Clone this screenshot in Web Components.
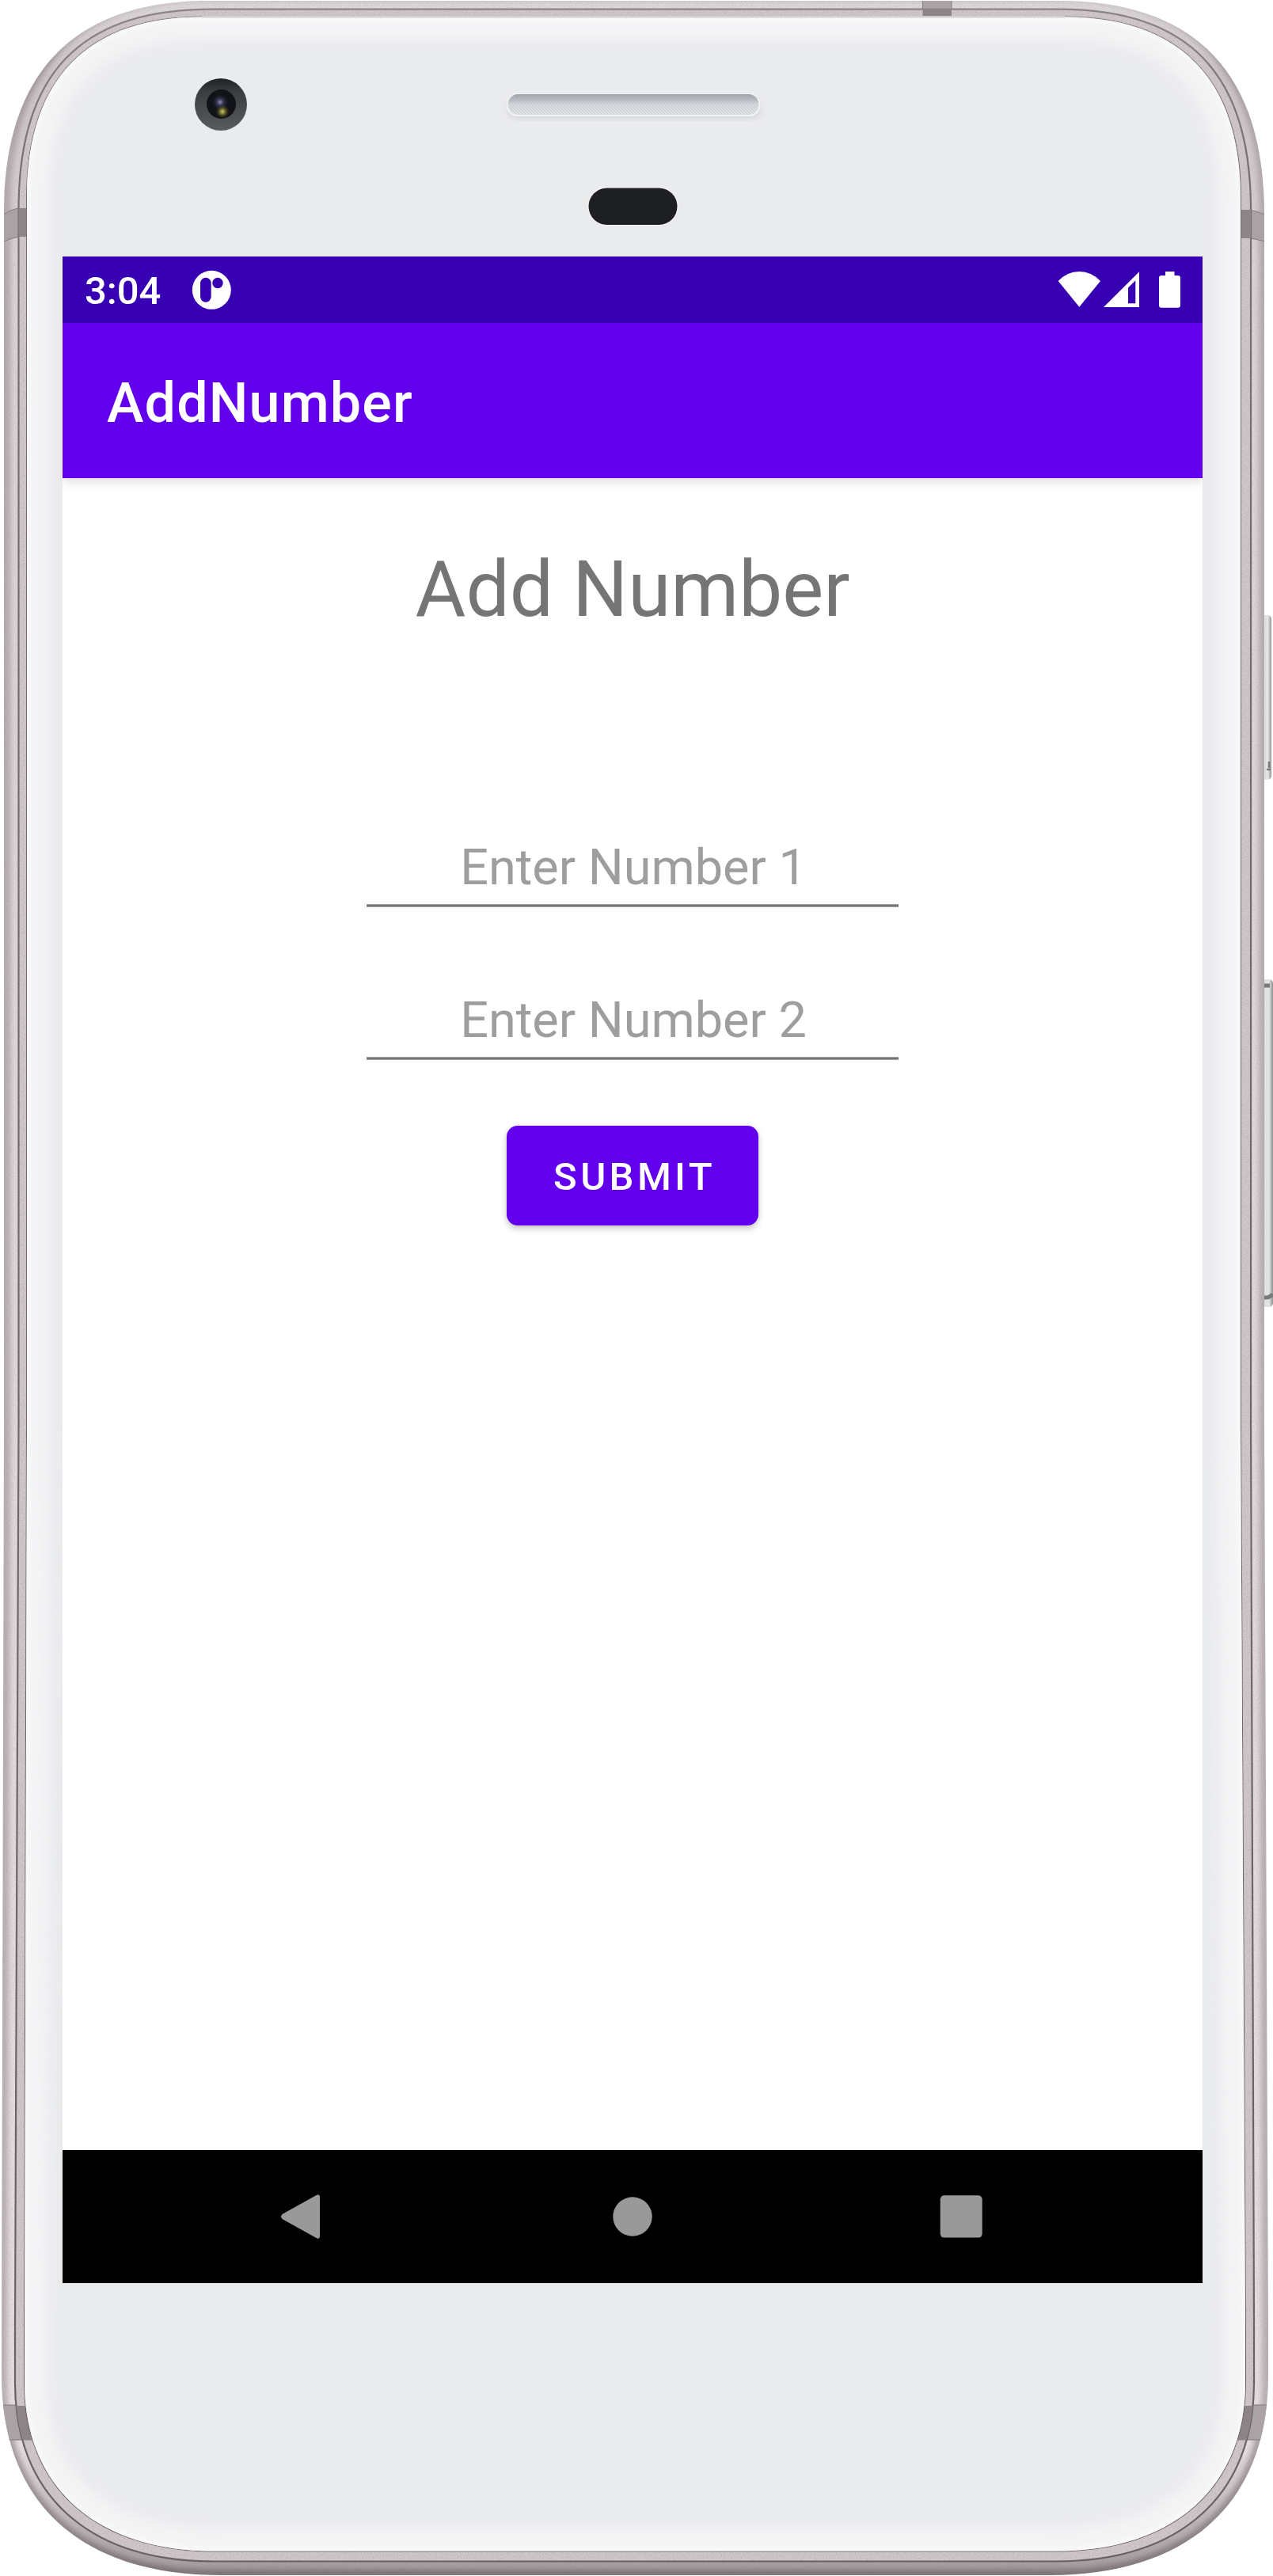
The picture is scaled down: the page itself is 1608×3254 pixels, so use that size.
<!DOCTYPE html>
<html lang="en">
<head>
<meta charset="utf-8">
<title>AddNumber</title>
<style>
  html, body { margin: 0; background: #fff; }
  body { width: 1608px; height: 3254px; overflow: hidden; font-family: Roboto, sans-serif; }
</style>
</head>
<body>
<phone-frame>
  <status-bar>3:04</status-bar>
  <app-bar>AddNumber</app-bar>
  <number-form heading="Add Number">
    <number-field>Enter Number 1</number-field>
    <number-field>Enter Number 2</number-field>
    <submit-button slot="action">SUBMIT</submit-button>
  </number-form>
  <nav-bar></nav-bar>
</phone-frame>
<script>
const define = (name, html, setup) => customElements.define(name, class extends HTMLElement {
  constructor() {
    super();
    this.attachShadow({ mode: 'open' }).innerHTML = html;
  }
  connectedCallback() { if (setup) setup(this); }
});

/* Device body: metal rim, glass, camera, earpiece, sensor, side keys. */
const OUTER = 'M5 270C5 100 85 1 265 1H1337C1517 1 1597 100 1597 270V1800L1602 2940V3000C1602 3160 1504 3253 1324 3253H280C100 3253 2 3160 2 3000V2940L5 1800Z';
const SEAM = 'M23.5 265C23.5 95 100 11.7 265 11.7H1338C1503 11.7 1580 95 1580 265V1800L1584 2940V3010C1584 3150 1493 3235.5 1333 3235.5H270C110 3235.5 19 3150 19 3010V2940L23.5 1800Z';
const GLASS = 'M34 250C34 95 115 21.5 255 21.5H1345C1485 21.5 1567 95 1567 250V1800L1573 2940V3010C1573 3140 1484 3222.5 1334 3222.5H270C120 3222.5 31 3140 31 3010V2940L34 1800Z';

define('phone-frame', `
<style>
  :host { display: grid; width: 1608px; height: 3254px; }
  svg, main { grid-area: 1 / 1; }
  svg { display: block; }
  main { display: flex; flex-direction: column; width: 1440px; height: 2560px; margin: 324px 0 0 79px; background: #fff; z-index: 1; }
</style>
<svg width="1608" height="3254" viewBox="0 0 1608 3254">
  <defs>
    <clipPath id="co"><path d="${OUTER}"/></clipPath>
    <clipPath id="cs"><path d="${SEAM}"/></clipPath>
    <clipPath id="cg"><path d="${GLASS}"/></clipPath>
    <linearGradient id="rim" gradientUnits="userSpaceOnUse" x1="0" y1="0" x2="0" y2="3254">
      <stop offset="0" stop-color="#c9c2c4"/><stop offset=".025" stop-color="#9d9598"/><stop offset=".06" stop-color="#b4abae"/>
      <stop offset=".93" stop-color="#b9b0b4"/><stop offset=".98" stop-color="#8f868a"/><stop offset="1" stop-color="#7c7377"/>
    </linearGradient>
    <linearGradient id="shine" gradientUnits="userSpaceOnUse" x1="0" y1="0" x2="0" y2="3254">
      <stop offset="0" stop-color="#dfdadc"/><stop offset=".03" stop-color="#cbc3c6"/><stop offset=".1" stop-color="#dcd3d7"/>
      <stop offset=".95" stop-color="#e6dfe2"/><stop offset=".985" stop-color="#b5acb0"/><stop offset="1" stop-color="#a1989c"/>
    </linearGradient>
    <linearGradient id="line" gradientUnits="userSpaceOnUse" x1="0" y1="0" x2="0" y2="3254">
      <stop offset="0" stop-color="#8d8588"/><stop offset=".06" stop-color="#776e72"/><stop offset="1" stop-color="#665e62"/>
    </linearGradient>
    <linearGradient id="key" x1="0" x2="1" y1="0" y2="0">
      <stop offset="0" stop-color="#b9bab9"/><stop offset=".3" stop-color="#dfe1df"/><stop offset=".65" stop-color="#e3e5e3"/><stop offset="1" stop-color="#8f9190"/>
    </linearGradient>
    <linearGradient id="ear" x1="0" x2="0" y1="0" y2="1">
      <stop offset="0" stop-color="#9fa1aa"/><stop offset=".3" stop-color="#bcbec6"/><stop offset=".5" stop-color="#d6d8dd"/><stop offset="1" stop-color="#e0e2e5"/>
    </linearGradient>
    <linearGradient id="cam" x1="0" x2="0" y1="0" y2="1">
      <stop offset="0" stop-color="#1f2022"/><stop offset=".25" stop-color="#3c3d40"/><stop offset="1" stop-color="#5a5b5f"/>
    </linearGradient>
    <radialGradient id="lensA"><stop offset="0" stop-color="#8c8cb0"/><stop offset=".35" stop-color="#3b3a5c"/><stop offset="1" stop-color="#15161c" stop-opacity="0"/></radialGradient>
    <radialGradient id="lensB"><stop offset="0" stop-color="#d2c67c"/><stop offset=".35" stop-color="#75722f"/><stop offset="1" stop-color="#2b2c14" stop-opacity="0"/></radialGradient>
    <pattern id="mesh" width="4" height="4" patternUnits="userSpaceOnUse"><path d="M0 0L4 4" stroke="#b3b6bf" stroke-opacity=".5"/></pattern>
    <filter id="b3" x="-5%" y="-5%" width="110%" height="110%"><feGaussianBlur stdDeviation="3"/></filter>
    <filter id="b9" x="-5%" y="-5%" width="110%" height="110%"><feGaussianBlur stdDeviation="8"/></filter>
    <filter id="grain" x="0" y="0" width="100%" height="100%">
      <feTurbulence type="fractalNoise" baseFrequency=".55" numOctaves="2" seed="4"/>
      <feColorMatrix values="0 0 0 0 .35  0 0 0 0 .3  0 0 0 0 .33  1.6 0 0 0 -.68"/>
    </filter>
  </defs>

  <rect x="1594" y="777" width="12" height="208" rx="5" fill="url(#key)"/>
  <path d="M1603 962v8M1600 972h5" stroke="#77797a" stroke-width="2.5"/>
  <rect x="1594" y="1237" width="14" height="414" rx="5" fill="url(#key)"/>
  <path d="M1597 1245h7M1597 1639c5 0 9-1 10-5" stroke="#77797a" stroke-width="5" fill="none"/>

  <path d="${OUTER}" fill="url(#rim)"/>
  <g clip-path="url(#co)">
    <path d="${SEAM}" fill="none" stroke="url(#shine)" stroke-width="20" filter="url(#b3)"/>
    <rect width="1608" height="3254" filter="url(#grain)" opacity=".35"/>
    <g fill="#aaa2a5" stroke="#847b7f" stroke-width="1">
      <path d="M-2 276Q10 265 24 263V299Q10 301-2 309Z"/>
      <path d="M1610 279Q1596 268 1578 265V301Q1596 303 1610 310Z"/>
      <path d="M-5 3038H60V3082H-5ZM1540 3038H1612V3082H1540Z"/>
      <path d="M1165.500 -2H1202V14H1165.500Z"/>
    </g>
  </g>
  <path d="${SEAM}" fill="#cfc7ca" stroke="url(#line)" stroke-width="2.200"/>
  <g clip-path="url(#cs)">
    <rect width="1608" height="3254" filter="url(#grain)" opacity=".5"/>
    <path d="M20 263H40V299H20ZM1560 265H1582V301H1560ZM10 3039H70V3082.500H10ZM1530 3039H1590V3082.500H1530ZM1165.500 10H1202V26H1165.500Z" fill="#8c8487"/>
  </g>
  <path d="${GLASS}" fill="#eaebed" stroke="url(#line)" stroke-width="2"/>
  <g clip-path="url(#cg)">
    <path d="${GLASS}" fill="none" stroke="#f4f4f6" stroke-width="56" filter="url(#b9)"/>
    <path d="${GLASS}" fill="none" stroke="#f9f9fa" stroke-width="8" filter="url(#b3)"/>
  </g>
  <path d="M255 21.500H1345" stroke="#dcd8da" stroke-width="2.500"/>

  <circle cx="279" cy="132" r="33" fill="url(#cam)"/>
  <circle cx="279.500" cy="131.500" r="18.500" fill="#111318"/>
  <circle cx="278" cy="129" r="11" fill="url(#lensA)"/>
  <circle cx="281" cy="141" r="9" fill="url(#lensB)"/>

  <rect x="640" y="123" width="322" height="28" rx="14" fill="#d9dadd" filter="url(#b3)"/>
  <rect x="639.500" y="118" width="321" height="29" rx="14" fill="#f1f2f4"/>
  <rect x="641.500" y="119" width="317" height="26" rx="13" fill="url(#ear)"/>
  <rect x="641.500" y="119" width="317" height="26" rx="13" fill="url(#mesh)"/>
  <rect x="742.500" y="236.500" width="114" height="48.500" rx="24" fill="#f6f6f7"/>
  <rect x="743.500" y="237.500" width="112" height="46.500" rx="23.200" fill="#1d1f23"/>
</svg>
<main><slot></slot></main>`);

define('status-bar', `
<style>
  :host { display: flex; align-items: center; height: 84px; background: #3700b3; color: #fff; font: 500 49px/84px Roboto, sans-serif; }
  .time { width: 135px; padding: 4px 0 0 28px; }
  .icons { margin-left: auto; }
  svg { display: block; }
</style>
<span class="time"><slot></slot></span>
<svg width="50" height="84" viewBox="242 324 50 84">
  <circle cx="267.300" cy="366.300" r="24.500" fill="#fff"/>
  <rect x="253" y="350.700" width="13.700" height="31" rx="6.850" fill="#3700b3"/>
  <circle cx="275" cy="357.500" r="6.700" fill="#3700b3"/>
</svg>
<svg class="icons" width="189" height="84" viewBox="1330 324 189 84" fill="#fff">
  <path d="M1336.700 355Q1348 343 1363.300 343T1390 355L1363.300 387.700Z"/>
  <path fill-rule="evenodd" d="M1394 388L1439 343.300V388ZM1425 363.500V383.300H1434.300V354.300Z"/>
  <path d="M1472 343H1483.500V348H1488Q1491 348 1491 351V385.500Q1491 388.700 1488 388.700H1467Q1464 388.700 1464 385.500V351Q1464 348 1467 348H1472Z"/>
</svg>`);

define('app-bar', `
<style>
  :host { display: block; height: 196px; padding-left: 56px; box-sizing: border-box; background: #6200ee; color: #fff; font: 500 70px/202px Roboto, sans-serif; letter-spacing: 1.15px; box-shadow: 0 4px 14px rgba(0,0,0,.14); clip-path: inset(0 0 -40px 0); }
</style>
<slot></slot>`);

define('number-form', `
<style>
  :host { display: flex; flex: 1; flex-direction: column; align-items: center; padding-top: 83px; }
  h1 { margin: 0 0 256px; font: 400 98px/116px Roboto, sans-serif; color: #757575; }
  .fields { display: flex; flex-direction: column; gap: 106px; margin-bottom: 83px; }
</style>
<h1></h1>
<div class="fields"><slot></slot></div>
<slot name="action"></slot>`, el => { el.shadowRoot.querySelector('h1').textContent = el.getAttribute('heading'); });

define('number-field', `
<style>
  :host { display: flex; flex-direction: column; gap: 9px; width: 672px; text-align: center; font: 400 63px/74px Roboto, sans-serif; color: #9e9e9e; }
  span { padding-left: 2px; }
  i { height: 4px; background: linear-gradient(#a2a2a2 1px, #757575 1px 3px, #a2a2a2 3px); }
</style>
<span><slot></slot></span><i></i>`);

define('submit-button', `
<style>
  :host { display: block; width: 318px; height: 126px; }
  button { display: block; width: 318px; height: 126px; padding: 4px 0 0 5px; border: 0; border-radius: 14px; background: #6200ee; color: #fff; font: 500 49px/60px Roboto, sans-serif; letter-spacing: 4.375px; box-shadow: 0 5px 8px rgba(0,0,0,.16), 0 1px 6px rgba(0,0,0,.1); }
</style>
<button type="button"><slot></slot></button>`);

define('nav-bar', `
<style>
  :host { display: flex; align-items: center; height: 168px; background: #000; }
  svg { display: block; }
</style>
<svg width="1440" height="168" viewBox="79 2716 1440 168" fill="#999">
  <path d="M356.500 2797L400 2772.800Q404 2771 404 2775V2825Q404 2829 400 2827.200L356.500 2803Q353.500 2800 356.500 2797Z"/>
  <circle cx="799" cy="2800" r="24.700"/>
  <rect x="1187.700" y="2773.300" width="53" height="53.300" rx="5"/>
</svg>`);
</script>
</body>
</html>
